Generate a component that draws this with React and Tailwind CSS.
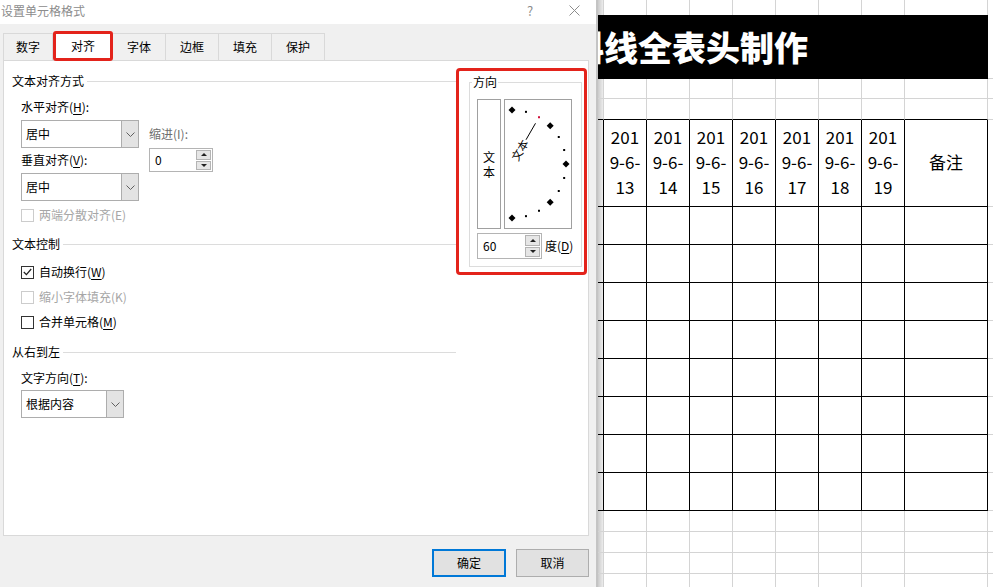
import React from 'react';

const COLS = ['w-[6px]', 'w-[43px]', 'w-[43px]', 'w-[43px]', 'w-[43px]', 'w-[43px]', 'w-[43px]', 'w-[43px]', 'w-[83px]', 'flex-1'];
const DAYS = ['13', '14', '15', '16', '17', '18', '19'];

function U({ children }) {
  return <span className="underline underline-offset-2">{children}</span>;
}

function Chevron() {
  return (
    <svg width="9" height="5" viewBox="0 0 9 5">
      <path d="M0.5 0.5 L4.5 4.5 L8.5 0.5" fill="none" stroke="#606060" strokeWidth="1" />
    </svg>
  );
}

function Select({ value, width }) {
  return (
    <div className={`flex h-[28px] border border-[#adadad] bg-white ${width}`}>
      <div className="flex-1 pl-[4px] text-[12px] leading-[26px] text-black">{value}</div>
      <div className="flex w-[17px] items-center justify-center border-l border-[#adadad] bg-[#e3e3e3]">
        <Chevron />
      </div>
    </div>
  );
}

function Spinner({ value, width, height }) {
  return (
    <div className={`flex border border-[#b4b4b4] bg-white ${width} ${height}`}>
      <div className="flex flex-1 items-center pl-[5px] text-[12px] text-black">{value}</div>
      <div className="flex w-[16px] flex-col gap-px py-px pr-px">
        <div className="flex flex-1 items-center justify-center border border-[#b4b4b4] bg-[#e6e6e6]">
          <svg width="6" height="3" viewBox="0 0 6 3"><path d="M0 3 L3 0 L6 3Z" fill="#222" /></svg>
        </div>
        <div className="flex flex-1 items-center justify-center border border-[#b4b4b4] bg-[#e6e6e6]">
          <svg width="6" height="3" viewBox="0 0 6 3"><path d="M0 0 L3 3 L6 0Z" fill="#222" /></svg>
        </div>
      </div>
    </div>
  );
}

function Check({ checked, disabled, children }) {
  return (
    <div className="flex h-[16px] items-center gap-[5px]">
      <div className={`flex h-[13px] w-[13px] items-center justify-center border bg-white ${disabled ? 'border-[#cccccc]' : 'border-[#333333]'}`}>
        {checked && (
          <svg width="9" height="8" viewBox="0 0 9 8">
            <path d="M0.8 4 L3.4 6.6 L8.2 1" fill="none" stroke="#222" strokeWidth="1.2" />
          </svg>
        )}
      </div>
      <span className={`text-[12px] leading-[16px] ${disabled ? 'text-[#a6a6a6]' : 'text-black'}`}>{children}</span>
    </div>
  );
}

function Section({ title, className }) {
  return (
    <div className={`flex h-[16px] items-center gap-[3px] ${className}`}>
      <span className="text-[12px] leading-[16px] text-black">{title}</span>
      <div className="h-px flex-1 bg-[#dcdcdc]" />
    </div>
  );
}

function Dial() {
  const cx = 8;
  const cy = 65;
  const r = 54;
  const angles = [90, 75, 60, 45, 30, 15, 0, -15, -30, -45, -60, -75, -90];
  const rad = (a) => (a * Math.PI) / 180;
  return (
    <svg width="68" height="130" viewBox="0 0 68 130" className="block">
      <rect x="0.5" y="0.5" width="67" height="129" fill="white" stroke="#a0a0a0" />
      {angles.map((a) => {
        const x = cx + r * Math.cos(rad(a));
        const y = cy - r * Math.sin(rad(a));
        if (a % 45 === 0) {
          return <path key={a} d={`M${x} ${y - 3.5} L${x + 3.5} ${y} L${x} ${y + 3.5} L${x - 3.5} ${y}Z`} fill="#000" />;
        }
        return <rect key={a} x={x - 1} y={y - 1} width="2" height="2" fill={a === 60 ? '#d0103a' : '#000'} />;
      })}
      <line
        x1={cx + 28 * Math.cos(rad(60))}
        y1={cy - 28 * Math.sin(rad(60))}
        x2={cx + 47 * Math.cos(rad(60))}
        y2={cy - 47 * Math.sin(rad(60))}
        stroke="#000"
        strokeWidth="1"
      />
      <text x={cx + 5} y={cy + 4} fontSize="11" fill="#000" transform={`rotate(-60 ${cx} ${cy})`} fontFamily="Noto Sans CJK SC, sans-serif">
        文本
      </text>
    </svg>
  );
}

function Dialog() {
  const tabs = ['数字', '对齐', '字体', '边框', '填充', '保护'];
  return (
    <div className="flex h-[587px] w-[598px] shrink-0 flex-col border-r-2 border-[#c4c4c4] bg-[#f0f0f0]">
      <div className="flex h-[24px] items-center bg-white pr-[16px] pb-[3px] pl-px">
        <span className="text-[12px] text-[#8c8c8c]">设置单元格格式</span>
        <div className="flex-1" />
        <span className="w-[14px] text-center text-[13px] text-[#8c8c8c]">?</span>
        <div className="w-[32px]" />
        <svg width="11" height="11" viewBox="0 0 11 11">
          <path d="M0.5 0.5 L10.5 10.5 M10.5 0.5 L0.5 10.5" stroke="#8c8c8c" strokeWidth="1" />
        </svg>
      </div>

      <div className="mt-[7px] flex h-[29px] items-end pl-[3px]">
        {tabs.map((t, i) =>
          t === '对齐' ? (
            <div key={t} className="relative z-10 -mb-px flex h-[30px] w-[60px] items-center justify-center rounded-[3px] border-[3px] border-[#e3231b] bg-white text-[12px] text-black">
              {t}
            </div>
          ) : (
            <div key={t} className={`flex h-[27px] items-center justify-center border-t border-r border-[#d9d9d9] text-[12px] text-black ${i === 0 ? 'w-[50px] border-l' : 'w-[53px]'}`}>
              {t}
            </div>
          )
        )}
      </div>

      <div className="ml-[3px] flex h-[476px] w-[586px] border border-[#d9d9d9] bg-white">
        <div className="flex w-[452px] flex-col pl-[8px]">
          <Section title="文本对齐方式" className="mt-[12px]" />
          <div className="mt-[10px] h-[16px] pl-[9px] text-[12px] leading-[16px] text-black">
            水平对齐(<U>H</U>):
          </div>
          <div className="flex pl-[9px]">
            <div className="flex flex-col">
              <div className="mt-[5px]"><Select value="居中" width="w-[118px]" /></div>
              <div className="mt-[4px] h-[16px] text-[12px] leading-[16px] text-black">
                垂直对齐(<U>V</U>):
              </div>
              <div className="mt-[5px]"><Select value="居中" width="w-[118px]" /></div>
            </div>
            <div className="ml-[10px] flex flex-col">
              <div className="mt-[5px] flex h-[28px] items-center text-[12px] text-[#6e6e6e]">缩进(I):</div>
              <Spinner value="0" width="w-[64px]" height="h-[24px]" />
            </div>
          </div>
          <div className="mt-[6px] pl-[9px]">
            <Check disabled>两端分散对齐(E)</Check>
          </div>
          <Section title="文本控制" className="mt-[13px]" />
          <div className="mt-[12px] pl-[9px]">
            <Check checked>自动换行(<U>W</U>)</Check>
          </div>
          <div className="mt-[9px] pl-[9px]">
            <Check disabled>缩小字体填充(K)</Check>
          </div>
          <div className="mt-[9px] pl-[9px]">
            <Check>合并单元格(<U>M</U>)</Check>
          </div>
          <Section title="从右到左" className="mt-[14px]" />
          <div className="mt-[10px] h-[16px] pl-[9px] text-[12px] leading-[16px] text-black">
            文字方向(<U>T</U>):
          </div>
          <div className="mt-[4px] pl-[9px]">
            <Select value="根据内容" width="w-[103px]" />
          </div>
        </div>

        <div className="mt-[7px] h-[207px] w-[131px] rounded-[4px] border-[3px] border-[#e3231b]">
          <div className="relative mt-[11px] ml-[10px] h-[185px] w-[113px] border border-[#dcdcdc]">
            <span className="absolute top-[-9px] left-[2px] bg-white px-px text-[12px] leading-[16px] text-black">方向</span>
            <div className="flex gap-[3px] pt-[16px] pl-[7px]">
              <div className="flex h-[130px] w-[24px] flex-col items-center justify-center gap-px border border-[#a0a0a0] text-[12px] leading-[14px] text-black">
                <span>文</span>
                <span>本</span>
              </div>
              <Dial />
            </div>
            <div className="mt-[4px] flex items-center gap-[3px] pl-[7px]">
              <Spinner value="60" width="w-[65px]" height="h-[26px]" />
              <span className="text-[12px] text-black">
                度(<U>D</U>)
              </span>
            </div>
          </div>
        </div>
      </div>

      <div className="mt-[13px] flex justify-end gap-[10px] pr-[7px]">
        <button type="button" className="h-[28px] w-[74px] border-2 border-[#0078d7] bg-[#e1e1e1] text-[12px] text-black">
          确定
        </button>
        <button type="button" className="h-[28px] w-[73px] border border-[#adadad] bg-[#e1e1e1] text-[12px] text-black">
          取消
        </button>
      </div>
    </div>
  );
}

function GridRow({ h, kind }) {
  const table = kind === 'header' || kind === 'table';
  return (
    <div className={`flex shrink-0 ${h}`}>
      {COLS.map((w, i) => {
        const inTable = i <= 8;
        const right = i === 9 ? '' : table && inTable ? 'border-r border-r-black' : 'border-r border-r-[#d4d4d4]';
        let bottom = 'border-b border-b-[#d4d4d4]';
        if (kind === 'first') bottom = '';
        if ((kind === 'top' || table) && inTable) bottom = 'border-b border-b-black';
        const bg = i === 0 ? 'bg-linear-to-r from-[#cbcbcb] to-[#ececec]' : 'bg-white';
        let content = null;
        if (kind === 'header' && i >= 1 && i <= 7) {
          content = (
            <div className="flex h-full flex-col items-center justify-center pb-[4px] text-[17px] leading-[25px] text-black">
              <span>201</span>
              <span>9-6-</span>
              <span>{DAYS[i - 1]}</span>
            </div>
          );
        }
        if (kind === 'header' && i === 8) {
          content = <div className="flex h-full items-center justify-center pb-[2px] text-[17px] text-black">备注</div>;
        }
        return (
          <div key={i} className={`h-full shrink-0 ${w} ${right} ${bottom} ${bg}`}>
            {content}
          </div>
        );
      })}
    </div>
  );
}

function Sheet() {
  return (
    <div className="flex h-[587px] flex-1 flex-col overflow-hidden bg-white">
      <GridRow h="h-[15px]" kind="first" />
      <div className="flex h-[64px] shrink-0">
        <div className="flex h-full w-[390px] shrink-0 items-center overflow-hidden bg-black">
          <span className="ml-[-28px] text-[34px] leading-[64px] font-black whitespace-nowrap text-white">斜线全表头制作</span>
        </div>
        <div className="h-full flex-1 border-b border-b-[#d4d4d4]" />
      </div>
      <GridRow h="h-[20px]" kind="plain" />
      <GridRow h="h-[21px]" kind="top" />
      <GridRow h="h-[87px]" kind="header" />
      {[0, 1, 2, 3, 4, 5, 6, 7].map((k) => (
        <GridRow key={k} h="h-[38px]" kind="table" />
      ))}
      {[0, 1, 2, 3].map((k) => (
        <GridRow key={`g${k}`} h="h-[21px]" kind="plain" />
      ))}
    </div>
  );
}

export default function App() {
  return (
    <div className="flex h-[587px] w-[993px] overflow-hidden bg-white font-['Noto_Sans_CJK_SC',sans-serif]">
      <Dialog />
      <Sheet />
    </div>
  );
}
